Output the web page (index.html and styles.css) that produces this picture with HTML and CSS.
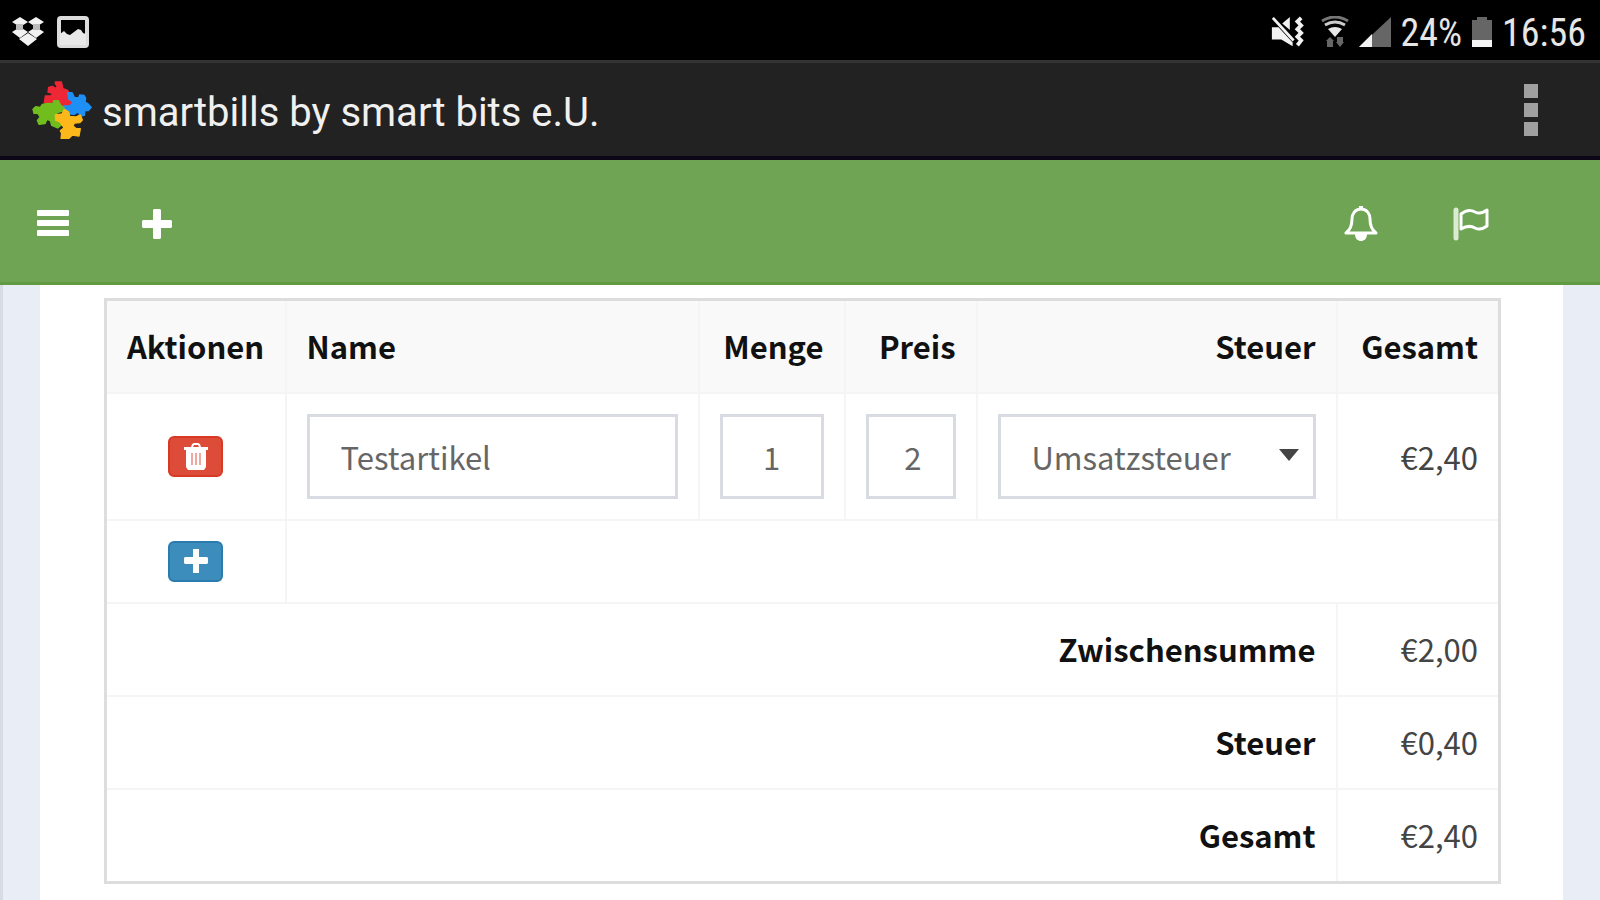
FILE: index.html
```html
<!DOCTYPE html>
<html lang="de">

<head>
    <meta charset="UTF-8">
    <meta name="viewport" content="width=device-width, initial-scale=1.0">
    <title>smartbills by smart bits e.U.</title>
    <link rel="stylesheet" href="styles.css">
</head>

<body>

    <!-- Status Bar -->
    <div class="status-bar">
        <div class="status-left">
            <svg width="34" height="32" viewBox="0 0 34 32" fill="#f2f2f2">
                <path d="M9 1l8 5-8 5-8-5zM25 1l8 5-8 5-8-5zM9 11l8 5-8 6-8-6zM25 11l8 5-8 6-8-6z"/>
                <path d="M8 23l9-6 9 6-9 7z"/>
                <path d="M5 8h7v6H5zM22 8h7v6h-7z" fill="#bbb"/>
            </svg>
            <svg width="32" height="32" viewBox="0 0 32 32">
                <rect x="2" y="2" width="28" height="28" rx="2" fill="none" stroke="#dcdcdc" stroke-width="4"/>
                <path d="M3 18l4-3 3 3 3 1 4-3 4-3 3 1 2 3 3 1v11H3z" fill="#e8e8e8"/>
            </svg>
        </div>
        <div class="status-right">
            <svg width="34" height="34" viewBox="0 0 36 34" fill="#f2f2f2">
                <path d="M2 12h7l15 16v4L12 25H2z"/>
                <path d="M13 8l8-7v14z"/>
                <path d="M3 2l22 24" stroke="#f2f2f2" stroke-width="3"/>
                <path d="M33 2l-4 4 4 4-4 4 4 4-4 4 4 4-4 5" fill="none" stroke="#f2f2f2" stroke-width="4"/>
            </svg>
            <svg class="wifi" width="28" height="32" viewBox="0 0 28 32" fill="none">
                <path d="M1 5q13-8 26 0" stroke="#777" stroke-width="3"/>
                <path d="M4 9q10-6 20 0" stroke="#ccc" stroke-width="3"/>
                <path d="M7 13q7-4 14 0l-7 8z" fill="#e8e8e8"/>
                <path d="M5 25l4-4 4 4h-1v6H6v-6zM15 26h1v-5h6v5h1l-4 5z" fill="#666"/>
            </svg>
            <svg width="34" height="32" viewBox="0 0 34 32">
                <path d="M33 1v30H1z" fill="#666"/>
                <path d="M14 18v13H1z" fill="#f2f2f2"/>
            </svg>
            <span class="battery-level">24%</span>
            <svg width="22" height="32" viewBox="0 0 22 32">
                <path d="M6 1h10v3h5v27H1V4h5z" fill="#666"/>
                <path d="M1 24h20v7H1z" fill="#f4f4f4"/>
            </svg>
            <span class="clock">16:56</span>
        </div>
    </div>

    <!-- App Title -->
    <header class="title-bar">
        <svg class="logo" width="60" height="58" viewBox="95 63 180 174" stroke-width="4" stroke-linejoin="round">
            <path fill="#ee2736" stroke="#ee2736" d="M165 66h18l5 20 14 5 6 12-5 14 13 10-12 16-22-1-7-20-14-3-10 11-19-2 3-20 18-1 3-7-13-4 2-14 11-3 9 6 6-5-6-9z"/>
            <path fill="#1e90f5" stroke="#1e90f5" d="M202 98h13l7 14 13 1 3-8 13 1 5 8-2 13 8 3 11 12-9 10h-10l-2 14-12 2-8-12-10 7-12-1-17-12-1-12 17-1 9-10-13-10z"/>
            <path fill="#72bd1e" stroke="#72bd1e" d="M98 148l8-8 14 2 6-9 16-3 15 1 3-9h14l7 14 10 6-3 11-18 5v14l10 8 4 14-12 10-18-8-4-14-10-4-6 13-18 2-5-12 9-10-8-11h-11z"/>
            <path fill="#fcb81b" stroke="#fcb81b" d="M165 165l20-3 7-14 13 8 3 13 17 2 15-6 6 15-8 8-16 1-4 9 10 8h12l-4 22-20-3-10 10h-24l2-15-4-8 11-9-13-18-12-4z"/>
        </svg>
        <h1 class="app-title">smartbills by smart bits e.U.</h1>
        <button type="button" class="icon-button overflow" aria-label="Optionen">
            <svg width="16" height="54" viewBox="0 0 16 54" fill="#a0a0a0">
                <rect x="1" y="1" width="14" height="14"/>
                <rect x="1" y="20" width="14" height="14"/>
                <rect x="1" y="39" width="14" height="14"/>
            </svg>
        </button>
    </header>

    <!-- Navigation -->
    <nav class="navbar">
        <button type="button" class="icon-button" aria-label="Menü">
            <svg width="32" height="30" viewBox="0 0 32 30" fill="#fff">
                <rect x="0" y="1" width="32" height="6" rx="1"/>
                <rect x="0" y="11" width="32" height="6" rx="1"/>
                <rect x="0" y="21" width="32" height="6" rx="1"/>
            </svg>
        </button>
        <button type="button" class="icon-button nav-add" aria-label="Neu">
            <svg width="30" height="30" viewBox="0 0 30 30" fill="#fff">
                <path d="M12 0h6l1 1v10h10l1 1v6l-1 1H19v10l-1 1h-6l-1-1V19H1l-1-1v-6l1-1h10V1z"/>
            </svg>
        </button>
        <button type="button" class="icon-button nav-bell" aria-label="Benachrichtigungen">
            <svg width="34" height="38" viewBox="0 0 34 38">
                <path d="M17 4c-6 0-9 5-9 10 0 7-2 11-6 14h30c-4-3-6-7-6-14 0-5-3-10-9-10z" fill="none" stroke="#fff" stroke-width="3" stroke-linejoin="round"/>
                <path d="M15 1h4v4h-4zM11 29h12c0 5-3 7-6 7s-6-2-6-7z" fill="#fff"/>
            </svg>
        </button>
        <button type="button" class="icon-button" aria-label="Aufgaben">
            <svg width="36" height="34" viewBox="0 0 36 34">
                <path d="M3 3v28" stroke="#dbead1" stroke-width="5" stroke-linecap="round"/>
                <path d="M8 7c5-4 9-5 14-2 4 2 8 1 12-2v16c-4 3-8 4-12 2-5-3-9-2-14 1z" fill="none" stroke="#fff" stroke-width="3" stroke-linejoin="round"/>
            </svg>
        </button>
    </nav>

    <!-- Invoice Items -->
    <main class="content">
        <table class="items">
            <colgroup>
                <col class="col-actions">
                <col>
                <col class="col-quantity">
                <col class="col-price">
                <col class="col-tax">
                <col class="col-total">
            </colgroup>
            <thead>
                <tr>
                    <th class="left">Aktionen</th>
                    <th class="left">Name</th>
                    <th>Menge</th>
                    <th>Preis</th>
                    <th>Steuer</th>
                    <th>Gesamt</th>
                </tr>
            </thead>
            <tbody>
                <tr class="item-row">
                    <td class="actions">
                        <button type="button" class="btn btn-danger" aria-label="Löschen">
                            <svg width="26" height="28" viewBox="0 0 26 28">
                                <path d="M8 5l1-3 2-1h4l2 1 1 3h7v3h-2v17l-2 3H5l-2-3V8H1V5zM11 3l-1 2h6l-1-2z" fill="#fff"/>
                                <path d="M9 11v12M13 11v12M17 11v12" stroke="#f0a79e" stroke-width="2"/>
                            </svg>
                        </button>
                    </td>
                    <td><input class="field" type="text" value="Testartikel" aria-label="Name"></td>
                    <td><input class="field quantity" type="text" value="1" aria-label="Menge"></td>
                    <td><input class="field price" type="text" value="2" aria-label="Preis"></td>
                    <td>
                        <div class="select">
                            <select class="field" aria-label="Steuer">
                                <option>Umsatzsteuer</option>
                            </select>
                            <svg class="caret" width="20" height="12" viewBox="0 0 20 12"><path d="M0 0h20L10 12z" fill="#444"/></svg>
                        </div>
                    </td>
                    <td>€2,40</td>
                </tr>
                <tr class="add-row">
                    <td class="actions">
                        <button type="button" class="btn btn-primary" aria-label="Hinzufügen">
                            <svg width="24" height="24" viewBox="0 0 24 24" fill="#fff">
                                <path d="M9 0h6v8h8l1 1v5l-1 1h-8v9H9v-9H1l-1-1V9l1-1h8z"/>
                            </svg>
                        </button>
                    </td>
                    <td colspan="5"></td>
                </tr>
                <tr>
                    <th colspan="5">Zwischensumme</th>
                    <td>€2,00</td>
                </tr>
                <tr>
                    <th colspan="5">Steuer</th>
                    <td>€0,40</td>
                </tr>
                <tr>
                    <th colspan="5">Gesamt</th>
                    <td>€2,40</td>
                </tr>
            </tbody>
        </table>
    </main>

</body>

</html>
```
FILE: styles.css
```css
/* General Styling */
* {
    box-sizing: border-box;
}

body {
    margin: 0;
    min-height: 100vh;
    display: flex;
    flex-direction: column;
    font-family: "Noto Sans CJK SC", "Open Sans", sans-serif;
    font-size: 31px;
    line-height: 46px;
    color: #444;
    background-color: #e9eef6;
}

svg {
    display: block;
}

.icon-button {
    padding: 0;
    border: none;
    background: none;
    cursor: pointer;
}

/* Status Bar */
.status-bar {
    display: flex;
    justify-content: space-between;
    align-items: center;
    height: 60px;
    padding: 4px 14px 0 11px;
    background-color: #000;
    color: #e6e6e6;
    font-family: "Roboto Condensed", "Liberation Sans Narrow", Roboto, sans-serif;
    font-size: 38px;
}

.status-left,
.status-right {
    display: flex;
    align-items: center;
    gap: 12px;
}

.status-right {
    gap: 9px;
}

.battery-level,
.clock {
    padding-top: 2px;
}

.wifi {
    margin-left: 8px;
}

/* App Title */
.title-bar {
    display: flex;
    align-items: center;
    height: 100px;
    padding: 0 61px 0 32px;
    border-top: 3px solid #333;
    border-bottom: 4px solid #0c0616;
    background-color: #222;
}

.app-title {
    margin: 0 0 0 10px;
    padding-top: 6px;
    color: #f0f0f0;
    font-family: Roboto, sans-serif;
    font-size: 40px;
    font-weight: normal;
}

.overflow {
    margin-left: auto;
}

/* Navigation */
.navbar {
    display: flex;
    align-items: center;
    height: 125px;
    padding: 5px 111px 0 37px;
    border-bottom: 3px solid #619a41;
    background-color: #6ea454;
}

.nav-add {
    margin-left: 73px;
}

.nav-bell {
    margin-left: auto;
    margin-right: 75px;
}

/* Invoice Items */
.content {
    flex: 1;
    margin: 0 37px 0 3px;
    padding: 13px 62px 18px 64px;
    border-left: 37px solid #e9eef6;
    background-color: #fff;
    box-shadow: -3px 0 #d6dbe4;
}

.items {
    width: 100%;
    table-layout: fixed;
    border-collapse: collapse;
    border: 3px solid #ddd;
}

.items th,
.items td {
    padding: 22px 20px 23px;
    border: 2px solid #f5f5f5;
    text-align: right;
}

.items th {
    color: #111;
    font-weight: bold;
}

.items thead th {
    background-color: #f9f9f9;
}

.items .left {
    text-align: left;
}

.items td.actions {
    text-align: center;
}

.items .item-row td {
    padding: 20px;
}

.items .add-row td {
    padding: 20px;
}

.col-actions {
    width: 180px;
}

.col-quantity {
    width: 146px;
}

.col-price {
    width: 132px;
}

.col-tax {
    width: 360px;
}

.col-total {
    width: 163px;
}

/* Form Fields */
.field {
    display: block;
    width: 100%;
    height: 85px;
    padding: 0 31px;
    border: 3px solid #d8dbe1;
    border-radius: 0;
    background-color: #fff;
    color: #666;
    font: inherit;
    appearance: none;
}

.quantity {
    text-align: center;
}

.price {
    text-align: right;
}

.select {
    position: relative;
}

.caret {
    position: absolute;
    top: 35px;
    right: 17px;
    pointer-events: none;
}

/* Buttons */
.btn {
    display: flex;
    justify-content: center;
    align-items: center;
    width: 55px;
    height: 41px;
    margin: 0 auto;
    padding: 0 0 2px;
    border: 2px solid;
    border-radius: 6px;
    cursor: pointer;
}

.btn-danger {
    border-color: #d73925;
    background-color: #dd4b39;
}

.btn-primary {
    border-color: #2a7cae;
    background-color: #3c8dbc;
}
```
